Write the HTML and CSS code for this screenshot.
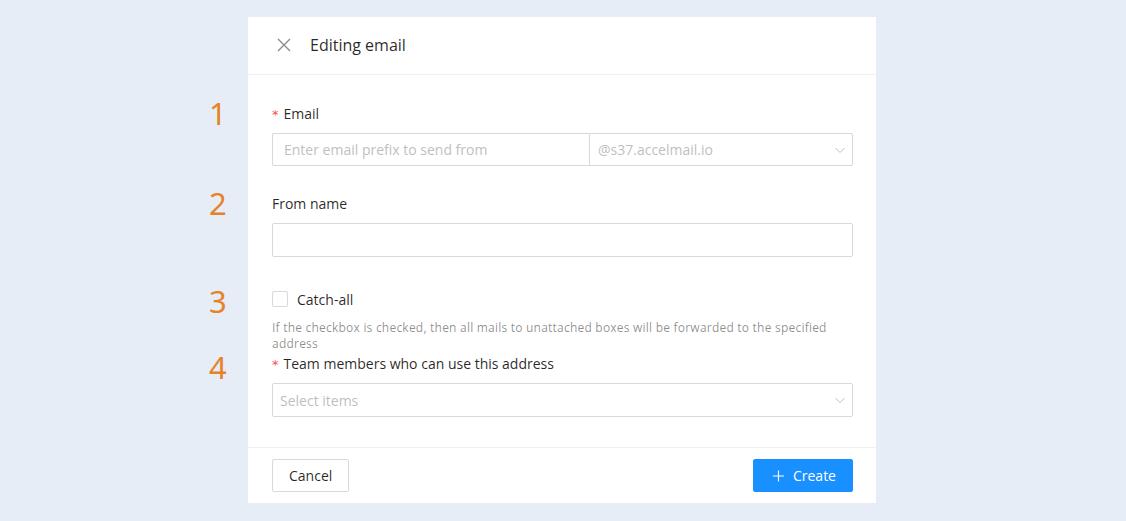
FILE: index.html
```html
<!DOCTYPE html>
<html lang="en">
<head>
<meta charset="utf-8">
<title>Editing email</title>
<link rel="stylesheet" href="styles.css">
</head>
<body>
<div class="page">
  <section class="drawer">
    <header class="drawer-header">
      <button class="close" aria-label="Close">
        <svg width="14" height="14" viewBox="0 0 14 14"><path d="M1 1L13 13M13 1L1 13" stroke="#8c8c8c" stroke-width="1.4" fill="none"/></svg>
      </button>
      <h1 class="title">Editing email</h1>
    </header>

    <form class="drawer-body">
      <div class="item item-email">
        <span class="step">1</span>
        <label class="label"><span class="req">*</span>Email</label>
        <div class="input-group">
          <input class="input prefix" placeholder="Enter email prefix to send from">
          <div class="select domain">
            <span class="placeholder">@s37.accelmail.io</span>
            <svg class="arrow" width="12" height="12" viewBox="0 0 12 12"><path d="M1.5 4l4.5 4.5 4.5-4.5" stroke="#bfbfbf" stroke-width="1" fill="none"/></svg>
          </div>
        </div>
      </div>

      <div class="item item-name">
        <span class="step">2</span>
        <label class="label">From name</label>
        <input class="input full">
      </div>

      <div class="item item-catch">
        <span class="step">3</span>
        <label class="check"><span class="box"></span>Catch-all</label>
        <p class="help">If the checkbox is checked, then all mails to unattached boxes will be forwarded to the specified address</p>
      </div>

      <div class="item item-team">
        <span class="step">4</span>
        <label class="label"><span class="req">*</span>Team members who can use this address</label>
        <div class="select multi">
          <span class="placeholder">Select items</span>
          <svg class="arrow" width="12" height="12" viewBox="0 0 12 12"><path d="M1.5 4l4.5 4.5 4.5-4.5" stroke="#bfbfbf" stroke-width="1" fill="none"/></svg>
        </div>
      </div>
    </form>

    <footer class="drawer-footer">
      <button class="btn">Cancel</button>
      <button class="btn primary">
        <svg width="14" height="14" viewBox="0 0 14 14"><path d="M7 1v12M1 7h12" stroke="#fff" stroke-width="1.2" fill="none"/></svg>
        Create
      </button>
    </footer>
  </section>
</div>
</body>
</html>
```

FILE: styles.css
```css
* { box-sizing: border-box; }

html, body {
  margin: 0;
  padding: 0;
  background: #e6edf6;
  font-family: "Open Sans", "Noto Sans", sans-serif;
  color: rgba(0, 0, 0, 0.85);
}

.page {
  display: flex;
  justify-content: center;
  padding: 17px 2px 18px 0;
}

.drawer {
  width: 628px;
  background: #fff;
  display: flex;
  flex-direction: column;
}

.drawer-header {
  height: 58px;
  display: flex;
  align-items: center;
  padding: 0 24px 1px 29px;
  border-bottom: 1px solid #f0f0f0;
}

.close {
  border: 0;
  background: none;
  padding: 0;
  margin: 0 19px 0 0;
  width: 14px;
  height: 14px;
  display: flex;
}

.title {
  margin: 0;
  font-size: 16px;
  font-weight: 400;
  color: rgba(0, 0, 0, 0.85);
}

.drawer-body {
  padding: 28px 23px 30px 24px;
  display: flex;
  flex-direction: column;
}

.item { position: relative; }

/* orange step markers sitting in the gutter left of the drawer */
.step {
  position: absolute;
  left: -63px;
  top: -9px;
  font-size: 31px;
  line-height: 38px;
  color: #e8822a;
  font-family: "Noto Sans", sans-serif;
}

.label {
  display: block;
  height: 22px;
  line-height: 22px;
  font-size: 14px;
  margin-bottom: 8px;
}

.req {
  color: #ff4d4f;
  margin-right: 5px;
  font-family: "DejaVu Sans", sans-serif;
  font-size: 13px;
}

.input {
  height: 33px;
  border: 1px solid #d9d9d9;
  border-radius: 2px;
  padding: 0 11px;
  font: inherit;
  font-size: 14px;
  outline: none;
  color: rgba(0, 0, 0, 0.85);
}
.input::placeholder { color: #bfbfbf; }

.input-group {
  display: flex;
  height: 33px;
}

.prefix {
  width: 317px;
  border-radius: 2px 0 0 2px;
  border-right: 0;
}

.select {
  display: flex;
  align-items: center;
  justify-content: space-between;
  border: 1px solid #d9d9d9;
  border-radius: 2px;
  font-size: 14px;
}
.placeholder { color: #bfbfbf; }

.domain {
  flex: 1;
  border-radius: 0 2px 2px 0;
  padding: 0 6px 0 8px;
}

.full {
  display: block;
  width: 100%;
  height: 34px;
}

.item-email { margin-bottom: 27px; }
.item-name { margin-bottom: 31px; }
.item-name .step { top: -9px; }

.check {
  display: flex;
  align-items: center;
  height: 22px;
  font-size: 14px;
}
.box {
  width: 16px;
  height: 16px;
  border: 1px solid #d9d9d9;
  border-radius: 2px;
  margin-right: 9px;
}
.item-catch .step { top: -6px; }

.help {
  margin: 10px 0 0 0;
  font-size: 12px;
  letter-spacing: 0.22px;
  line-height: 16px;
  color: rgba(0, 0, 0, 0.45);
}

.item-team { margin-top: 1px; }
.item-team .step { top: -5px; }

.multi {
  height: 34px;
  padding: 0 6px 0 7px;
}

.drawer-footer {
  border-top: 1px solid #f0f0f0;
  display: flex;
  justify-content: space-between;
  padding: 11px 23px 11px 24px;
}

.btn {
  height: 33px;
  padding: 0 16px;
  border: 1px solid #d9d9d9;
  border-radius: 2px;
  background: #fff;
  font: inherit;
  font-size: 14px;
  color: rgba(0, 0, 0, 0.85);
  display: flex;
  align-items: center;
  gap: 8px;
}
.btn.primary {
  background: #1890ff;
  border-color: #1890ff;
  color: #fff;
  padding: 0 16px 0 18px;
  width: 100px;
}
```
